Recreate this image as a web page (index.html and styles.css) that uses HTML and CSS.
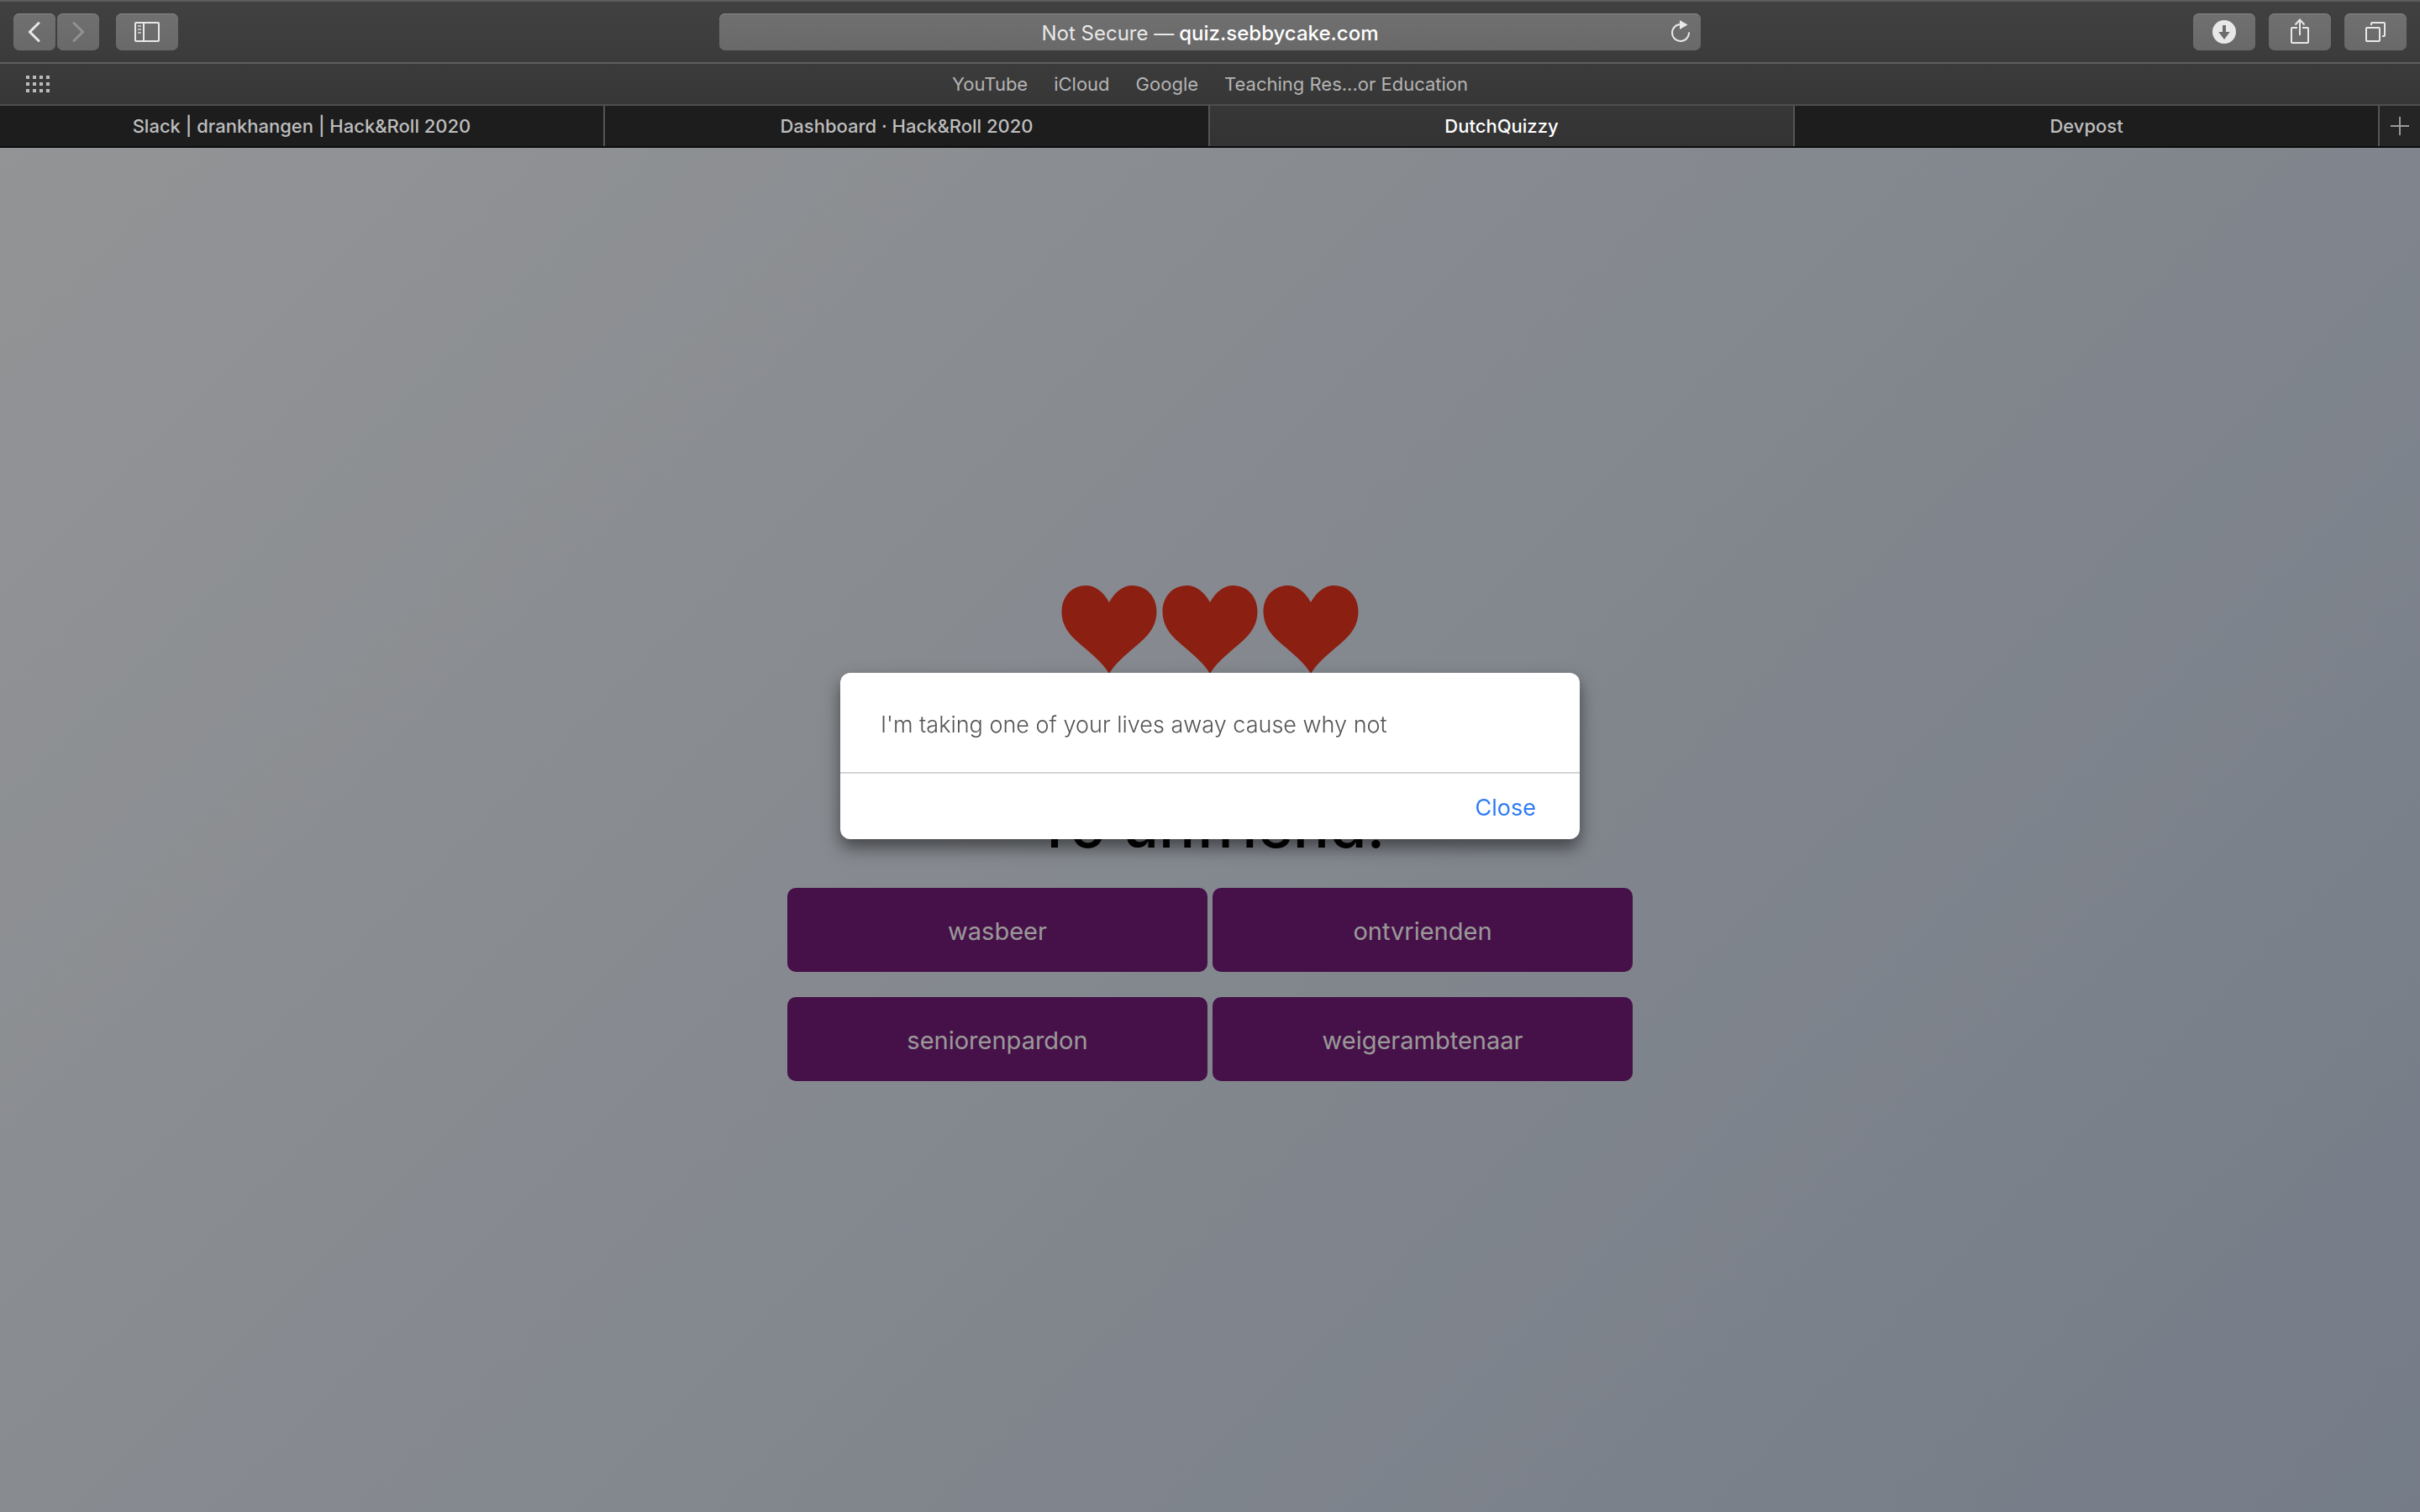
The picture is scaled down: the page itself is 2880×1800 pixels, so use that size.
FILE: index.html
```html
<!DOCTYPE html>
<html lang="en">
<head>
    <meta charset="utf-8">
    <meta name="viewport" content="width=device-width, initial-scale=1.0">
    <title>DutchQuizzy</title>

    <link rel="stylesheet" href="styles.css">
</head>

<body>
    <header>
        <div class="toolbar">
            <div class="tools">
                <div class="history">
                    <button class="tool small" aria-label="Back">
                        <svg width="50" height="44" viewBox="0 0 50 44"><path d="M30 11.500L19.500 22L30 32.500" stroke-width="3" stroke-linecap="round"/></svg>
                    </button>
                    <button class="tool small dimmed" aria-label="Forward">
                        <svg width="50" height="44" viewBox="0 0 50 44"><path d="M20 11.500L30.500 22L20 32.500" stroke-width="3" stroke-linecap="round"/></svg>
                    </button>
                </div>
                <button class="tool" aria-label="Sidebar">
                    <svg width="30" height="24" viewBox="0 0 30 24"><rect x="1" y="1" width="28" height="22" rx="1"/><path d="M11 1V23"/><path class="faint" d="M4 5H8M4 9H8M4 13H8"/></svg>
                </button>
            </div>

            <div class="address">
                <label for="url">Not Secure —</label>
                <input id="url" type="text" value="quiz.sebbycake.com">
                <button class="reload" aria-label="Reload">
                    <svg width="22" height="26" viewBox="0 0 22 26"><path d="M21 14.500A10 10 0 1 1 11 5"/><path class="solid" d="M10 0L19.500 5.500L10 11Z"/></svg>
                </button>
            </div>

            <div class="tools right">
                <button class="tool" aria-label="Downloads">
                    <svg width="28" height="28" viewBox="0 0 28 28"><path class="solid" fill-rule="evenodd" d="M14 0A14 14 0 0 1 14 28A14 14 0 0 1 14 0ZM12 6V14H7.300L14 23L20.700 14H16V6Z"/></svg>
                </button>
                <button class="tool share" aria-label="Share">
                    <svg width="22" height="30" viewBox="0 0 22 30"><path d="M8 11H2Q1 11 1 12V28Q1 29 2 29H20Q21 29 21 28V12Q21 11 20 11H14M11 2V20M5.500 7.500L11 1.500L16.500 7.500"/></svg>
                </button>
                <button class="tool" aria-label="Tab overview">
                    <svg width="24" height="24" viewBox="0 0 24 24"><rect x="1" y="7" width="16" height="16" rx="1"/><path d="M7 4V2Q7 1 8 1H22Q23 1 23 2V16Q23 17 22 17H20"/></svg>
                </button>
            </div>
        </div>

        <nav class="bookmarks">
            <button class="favourites" aria-label="Favourites">
                <svg width="28" height="20" viewBox="0 0 28 20"><path stroke-width="4" stroke-dasharray="4" d="M0 2H28M0 10H28M0 18H28"/></svg>
            </button>
            <a href="#">YouTube</a>
            <a href="#">iCloud</a>
            <a href="#">Google</a>
            <a href="#">Teaching Res...or Education</a>
        </nav>

        <div class="tabs">
            <button class="tab wide">Slack | drankhangen | Hack&amp;Roll 2020</button>
            <button class="tab wide">Dashboard · Hack&amp;Roll 2020</button>
            <button class="tab active">DutchQuizzy</button>
            <button class="tab">Devpost</button>
            <button class="new-tab" aria-label="New tab">
                <svg width="22" height="22" viewBox="0 0 22 22"><path d="M11 0V22M0 11H22"/></svg>
            </button>
        </div>
    </header>

    <main class="quiz">
        <div class="lives">
            <svg class="heart" viewBox="0 0 120 120"><use href="#heart"/></svg>
            <svg class="heart" viewBox="0 0 120 120"><use href="#heart"/></svg>
            <svg class="heart" viewBox="0 0 120 120"><path id="heart" d="M60 28C53 15 43 8 32.500 8C15 8 3.500 22 3.500 39C3.500 58 15 69 28 80C42 92 52 100 60 113C68 100 78 92 92 80C105 69 116.500 58 116.500 39C116.500 22 105 8 87.500 8C77 8 67 15 60 28Z"/></svg>
        </div>
        <h1>To unfriend:</h1>
        <div class="answers">
            <button class="answer">wasbeer</button>
            <button class="answer">ontvrienden</button>
            <button class="answer">seniorenpardon</button>
            <button class="answer">weigerambtenaar</button>
        </div>
        <div class="backdrop"></div>
    </main>

    <dialog class="alert" open>
        <p>I'm taking one of your lives away cause why not</p>
        <div class="alert-footer">
            <button class="close">Close</button>
        </div>
    </dialog>
</body>
</html>
```
FILE: styles.css
```css
* {
    box-sizing: border-box;
}

body {
    margin: 0;
    min-height: 100vh;
    display: flex;
    flex-direction: column;
    font-family: Inter, "Liberation Sans", sans-serif;
}

button, input {
    font-family: inherit;
    border: 0;
    padding: 0;
    background: none;
}

button:focus, input:focus {
    outline: none;
}

svg {
    display: block;
    fill: none;
    stroke: #e8e8e8;
    stroke-width: 2;
}

.solid {
    fill: #e8e8e8;
    stroke: none;
}

.faint {
    stroke: #bbb;
}

/* browser bars */
header {
    background: linear-gradient(#414141, #333);
    border-bottom: 2px solid #0c0c0c;
}

.toolbar {
    display: grid;
    grid-template-columns: 1fr 41% 1fr;
    align-items: center;
    height: 76px;
    padding: 0 16px;
    border-top: 2px solid #5c5c5c;
    border-bottom: 2px solid #5e5e5e;
}

.tools {
    display: flex;
    gap: 20px;
}

.right {
    justify-content: flex-end;
    gap: 16px;
}

.history {
    display: flex;
    gap: 2px;
}

.tool {
    display: flex;
    align-items: center;
    justify-content: center;
    width: 74px;
    height: 44px;
    border-radius: 7px;
    background: linear-gradient(#707070, #696969);
    box-shadow: inset 0 1px #858585;
}

.small {
    width: 50px;
}

.dimmed svg {
    stroke: #929292;
}

.share {
    padding-bottom: 2px;
}

.address {
    position: relative;
    display: flex;
    align-items: center;
    justify-content: center;
    gap: 6px;
    height: 44px;
    padding-top: 2px;
    border-radius: 7px;
    background: linear-gradient(#707070, #696969);
    box-shadow: inset 0 1px #858585;
    color: #e8e8e8;
    font-size: 24px;
}

.address input {
    field-sizing: content;
    color: #fff;
    font-size: 24px;
    font-weight: 500;
}

.reload {
    position: absolute;
    right: 13px;
    top: 8px;
}

.bookmarks {
    position: relative;
    display: flex;
    align-items: center;
    justify-content: center;
    gap: 31px;
    height: 50px;
    border-bottom: 2px solid #4e4e4e;
}

.bookmarks a {
    color: #b4b4b4;
    font-size: 22px;
    text-decoration: none;
}

.favourites {
    position: absolute;
    left: 31px;
}

.favourites svg {
    stroke: #bbb;
}

.tabs {
    display: flex;
    height: 48px;
}

.tab {
    flex: 1;
    border-right: 2px solid #555;
    background: #1d1d1d;
    color: #bebebe;
    font-size: 22px;
    font-weight: 500;
}

.wide {
    flex: 0 0 25%;
}

.active {
    background: none;
    color: #fff;
}

.new-tab {
    display: flex;
    align-items: center;
    justify-content: center;
    width: 48px;
    background: #252525;
}

.new-tab svg {
    stroke: #999;
}

/* quiz page */
.quiz {
    position: relative;
    flex: 1;
    display: flex;
    flex-direction: column;
    align-items: center;
    justify-content: center;
    background: linear-gradient(135deg, #f5f7fa, #c3cfe2);
}

.lives {
    display: flex;
    margin-bottom: 134px;
}

.heart {
    width: 120px;
    height: 120px;
    fill: #e8341e;
    stroke: none;
}

h1 {
    margin: 0 0 34px;
    font-size: 72px;
    line-height: 80px;
    font-weight: 500;
}

.answers {
    display: grid;
    grid-template-columns: 500px 500px;
    gap: 30px 6px;
}

.answer {
    height: 100px;
    padding-top: 2px;
    border-radius: 10px;
    background: #751b78;
    color: #fff;
    font-size: 29px;
}

.backdrop {
    position: absolute;
    inset: 0;
    background: rgba(0, 0, 0, 0.4);
}

.alert {
    position: fixed;
    inset: 0;
    margin: auto;
    width: 880px;
    height: fit-content;
    padding: 0;
    border: 0;
    border-radius: 12px;
    background: #fff;
    box-shadow: 0 10px 20px rgba(0, 0, 0, 0.5);
    color: #545454;
}

.alert p {
    margin: 0;
    padding: 42px 48px 36px;
    font-size: 27px;
    font-weight: 300;
    line-height: 40px;
}

.alert-footer {
    display: flex;
    justify-content: flex-end;
    height: 80px;
    padding: 2px 52px 0 0;
    border-top: 2px solid #d4d4d4;
}

.close {
    color: #2f7cf6;
    font-size: 27px;
}
```
